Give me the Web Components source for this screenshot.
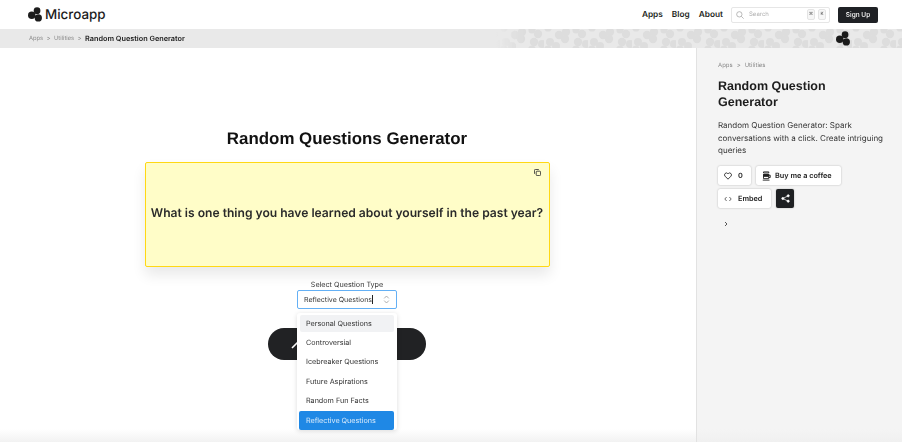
<!DOCTYPE html>
<html>
<head>
<meta charset="utf-8">
<title>Random Question Generator</title>
<style>
html, body { margin: 0; height: 100%; overflow: hidden; background: #fff; }
body { font-family: Inter, "Liberation Sans", sans-serif; color: #1d1f21; text-rendering: geometricPrecision; }
</style>
</head>
<body>
<micro-app></micro-app>

<script>
const logo = (size, color) => `
    <svg width="${size}" height="${size}" viewBox="0 0 24 24" fill="${color}">
        <circle cx="14.5" cy="5.8" r="5.4"/>
        <circle cx="6" cy="13" r="6"/>
        <circle cx="16.5" cy="17.5" r="5.8"/>
    </svg>`;

class AppHeader extends HTMLElement {
    constructor() {
        super();
        const shadow = this.attachShadow({ mode: 'open' });
        shadow.innerHTML = `
            <style>
            :host { display: flex; align-items: center; height: 29px; padding: 0 24px 0 28px; background: #fff; }
            .brand { display: flex; align-items: center; gap: 2px; font: 500 13.4px Inter, sans-serif; color: #1c1c1c; flex: 1; }
            nav { display: flex; gap: 9px; font: 600 8.3px Inter, sans-serif; margin-right: 8px; }
            .search { display: flex; align-items: center; box-sizing: border-box; width: 99px; height: 16px; border: 1px solid #e6e6e6; border-radius: 2px; padding: 0 3px 0 4px; margin-right: 8px; font-size: 6px; color: #b0b0b0; }
            .search svg { margin-right: 5px; }
            .search span { flex: 1; }
            .search kbd { box-sizing: border-box; width: 8px; height: 11px; margin-left: 3px; border: 1px solid #e4e4e4; border-radius: 2px; background: #f6f6f6; font: 500 4.5px Inter, sans-serif; color: #555; display: flex; align-items: center; justify-content: center; }
            button { width: 40px; height: 16px; padding: 0; border: 0; border-radius: 2px; background: #1f2125; color: #fff; font: 500 6.5px Inter, sans-serif; }
            </style>
            <div class="brand">${logo(15, '#1c1c1c')}<span>Microapp</span></div>
            <nav><span>Apps</span><span>Blog</span><span>About</span></nav>
            <div class="search">
                <svg width="8" height="8" viewBox="0 0 12 12" fill="none" stroke="#999" stroke-width="1"><circle cx="5" cy="5" r="4"/><path d="M8 8l3.5 3.5"/></svg>
                <span>Search</span><kbd>⌘</kbd><kbd>K</kbd>
            </div>
            <button>Sign Up</button>
        `;
    }
}

class AppCrumbs extends HTMLElement {
    constructor() {
        super();
        const shadow = this.attachShadow({ mode: 'open' });
        shadow.innerHTML = `
            <style>
            :host { display: flex; align-items: center; position: relative; height: 19px; padding-left: 29px; background: #e9e9e9; overflow: hidden; font: 400 5.8px Inter, sans-serif; color: #8b8b8b; }
            span { position: relative; }
            i { font-style: normal; position: relative; margin: 0 3.5px; color: #777; }
            b { position: relative; font-weight: 600; font-size: 7.3px; color: #1d1d1d; }
            .pattern { position: absolute; top: 0; left: 0; }
            .mark { position: absolute; left: 836px; top: 2px; line-height: 0; }
            </style>
            <svg class="pattern" width="902" height="19">
                <defs>
                    <linearGradient id="fade" x1="0" x2="1"><stop offset="0.55" stop-color="#fff" stop-opacity="0"/><stop offset="0.58" stop-color="#fff"/></linearGradient>
                    <mask id="m"><rect width="902" height="19" fill="url(#fade)"/></mask>
                    <pattern id="blobs" width="44" height="19" patternUnits="userSpaceOnUse" x="500" y="0">
                        <g fill="#dddddd">
                            <circle cx="22" cy="3" r="4.2"/><circle cx="15" cy="6" r="4.2"/><circle cx="21" cy="10" r="4.2"/>
                            <circle cx="6" cy="13" r="4"/><circle cx="12" cy="17" r="4"/><circle cx="4" cy="20" r="3.6"/><circle cx="4" cy="-1" r="3.6"/>
                            <circle cx="38" cy="5" r="4.2"/><circle cx="32" cy="1" r="3.6"/><circle cx="32" cy="20" r="3.6"/><circle cx="34" cy="13" r="4.2"/><circle cx="42" cy="15" r="4"/>
                        </g>
                    </pattern>
                </defs>
                <rect width="902" height="19" fill="url(#blobs)" mask="url(#m)"/>
            </svg>
            <span>Apps</span><i>&gt;</i><span>Utilities</span><i>&gt;</i><b>Random Question Generator</b>
            <div class="mark">${logo(15, '#1a1a1a')}</div>
        `;
    }
}

class QuestionCard extends HTMLElement {
    constructor() {
        super();
        const shadow = this.attachShadow({ mode: 'open' });
        shadow.innerHTML = `
            <style>
            :host { display: flex; align-items: center; justify-content: center; position: relative; box-sizing: border-box; width: 405px; height: 105px; padding-bottom: 5px; background: #fffdc8; border: 1px solid #ffd814; border-radius: 2px; box-shadow: 0 8px 14px rgba(0,0,0,.09); font: 600 12.1px Inter, sans-serif; color: #2a2a2a; white-space: nowrap; }
            svg { position: absolute; top: 6px; right: 8px; }
            </style>
            <svg width="7" height="7" viewBox="0 0 8 8" fill="none" stroke="#333" stroke-width="1"><rect x="2.5" y="2.5" width="5" height="5" rx="1"/><path d="M5.5 .5H1.5a1 1 0 0 0-1 1V5.5"/></svg>
            <slot></slot>
        `;
    }
}

class TypeSelect extends HTMLElement {
    constructor() {
        super();
        const shadow = this.attachShadow({ mode: 'open' });
        const options = ['Personal Questions', 'Controversial', 'Icebreaker Questions', 'Future Aspirations', 'Random Fun Facts', 'Reflective Questions'];
        shadow.innerHTML = `
            <style>
            :host { display: flex; flex-direction: column; align-items: center; position: relative; font: 400 7.2px Inter, sans-serif; color: #333; }
            label { line-height: 11px; }
            .field { display: flex; align-items: center; box-sizing: border-box; width: 100px; height: 19px; padding: 0 6px; background: #fff; border: 1px solid #64b0f5; border-radius: 2px; font-size: 7px; }
            .field span { flex: 1; }
            .field span::after { content: ''; display: inline-block; width: 1px; height: 9px; margin-left: 0; background: #222; vertical-align: -2px; }
            .menu { position: absolute; z-index: 2; top: 34px; left: 50%; margin-left: -50px; box-sizing: border-box; width: 100px; height: 117px; padding: 0 3px 0 2px; background: #fff; border-radius: 3px; box-shadow: 0 1px 5px rgba(0,0,0,.14); }
            .menu div { height: 19.5px; line-height: 19.5px; padding-left: 7px; border-radius: 2px; }
            .menu .hover { background: #f1f2f4; margin: 2px 0 .5px 1px; height: 17px; line-height: 17px; padding-left: 6px; }
            .menu .sel { background: #1f88e5; color: #dcecfb; }
            </style>
            <label>Select Question Type</label>
            <div class="field">
                <span>Reflective Questions</span>
                <svg width="7" height="9" viewBox="0 0 7 9" fill="none" stroke="#999" stroke-width=".8"><path d="M1.2 3.4L3.5 1l2.3 2.4M1.2 5.6L3.5 8l2.3-2.4"/></svg>
            </div>
            <div class="menu">
                ${options.map((o, i) => `<div class="${i == 0 ? 'hover' : i == 5 ? 'sel' : ''}">${o}</div>`).join('')}
            </div>
        `;
    }
}

class GeneratorPane extends HTMLElement {
    constructor() {
        super();
        const shadow = this.attachShadow({ mode: 'open' });
        shadow.innerHTML = `
            <style>
            :host { display: flex; flex-direction: column; align-items: center; flex: 1; box-sizing: border-box; padding: 80px 2px 0 0; border-right: 1px solid #e2e2e2; background: linear-gradient(to top, #f2f2f2, #fff 13px); }
            h1 { margin: 0 0 12px; font: 700 16.9px/22px "Liberation Sans", sans-serif; color: #111; }
            type-select { margin-top: 12px; }
            .go { display: flex; align-items: center; box-sizing: border-box; width: 158px; height: 32px; margin-top: 19px; padding-left: 23px; border: 0; border-radius: 16px; background: #212224; }
            </style>
            <h1>Random Questions Generator</h1>
            <question-card>What is one thing you have learned about yourself in the past year?</question-card>
            <type-select></type-select>
            <button class="go">
                <svg width="10" height="10" viewBox="0 0 10 10" fill="none" stroke="#fff" stroke-width="1.6"><path d="M1 9L7 3M7.5 .5v2M9.5 2.5h-2"/></svg>
            </button>
        `;
    }
}

class InfoSidebar extends HTMLElement {
    constructor() {
        super();
        const shadow = this.attachShadow({ mode: 'open' });
        shadow.innerHTML = `
            <style>
            :host { display: block; box-sizing: border-box; width: 205px; padding: 12px 12px 0 21px; background: linear-gradient(to top, #f0f0f0, #f4f4f4 13px); }
            .crumbs { display: flex; gap: 4px; font: 400 6px/12px Inter, sans-serif; color: #8a8a8a; }
            h2 { margin: 6px 0 0; max-width: 150px; font: 700 12.5px/16px "Liberation Sans", sans-serif; color: #1d1d1d; }
            p { margin: 9px 0 0; font: 400 8px/12.7px Inter, sans-serif; color: #333; }
            .row { display: flex; gap: 5px; margin-top: 4px; }
            p + .row { margin-top: 9px; }
            .btn { display: flex; align-items: center; box-sizing: border-box; height: 19px; background: #fff; border-radius: 2px; box-shadow: 0 0 2px rgba(0,0,0,.28); font: 600 7.3px Inter, sans-serif; color: #222; }
            .like { width: 33px; padding-left: 6px; gap: 6px; }
            .coffee { width: 85px; padding-left: 6px; gap: 4px; }
            .embed { width: 53px; padding-left: 6px; gap: 6px; }
            .share { width: 18px; justify-content: center; background: #1e2022; }
            .more { display: block; margin: 13px 0 0 5px; }
            </style>
            <div class="crumbs"><span>Apps</span><span>&gt;</span><span>Utilities</span></div>
            <h2>Random Question Generator</h2>
            <p>Random Question Generator: Spark conversations with a click. Create intriguing queries</p>
            <div class="row">
                <div class="btn like">
                    <svg width="8" height="8" viewBox="0 0 12 12" fill="none" stroke="#222" stroke-width="1.3"><path d="M6 10.8L1.6 6.3a2.8 2.8 0 0 1 4-4L6 2.8l.4-.5a2.8 2.8 0 0 1 4 4z"/></svg>
                    <span>0</span>
                </div>
                <div class="btn coffee">
                    <svg width="9" height="10" viewBox="0 0 12 13" fill="none" stroke="#222" stroke-width="1.2"><path d="M2 1h7v1.5H2zM2 4.5h7V10H2zM9 5.5h2v3H9M1 12h9"/><path d="M2 4.5h7v2.5H2z" fill="#222"/></svg>
                    <span>Buy me a coffee</span>
                </div>
            </div>
            <div class="row">
                <div class="btn embed">
                    <svg width="8" height="6" viewBox="0 0 8 6" fill="none" stroke="#444" stroke-width=".8"><path d="M2.6 1L.8 3l1.8 2M5.4 1l1.8 2-1.8 2"/></svg>
                    <span>Embed</span>
                </div>
                <div class="btn share">
                    <svg width="9" height="9" viewBox="0 0 10 10" fill="#fff" stroke="#fff" stroke-width=".8"><circle cx="8" cy="2" r="1.2"/><circle cx="2" cy="5" r="1.2"/><circle cx="8" cy="8" r="1.2"/><path d="M8 2L2 5l6 3" fill="none"/></svg>
                </div>
            </div>
            <svg class="more" width="6" height="6" viewBox="0 0 6 6" fill="none" stroke="#444" stroke-width=".9"><path d="M2 1l2 2-2 2"/></svg>
        `;
    }
}

class MicroApp extends HTMLElement {
    constructor() {
        super();
        const shadow = this.attachShadow({ mode: 'open' });
        shadow.innerHTML = `
            <style>
            :host { display: flex; flex-direction: column; height: 442px; opacity: .999; }
            .body { display: flex; flex: 1; }
            </style>
            <app-header></app-header>
            <app-crumbs></app-crumbs>
            <div class="body">
                <generator-pane></generator-pane>
                <info-sidebar></info-sidebar>
            </div>
        `;
    }
}

window.customElements.define('app-header', AppHeader);
window.customElements.define('app-crumbs', AppCrumbs);
window.customElements.define('question-card', QuestionCard);
window.customElements.define('type-select', TypeSelect);
window.customElements.define('generator-pane', GeneratorPane);
window.customElements.define('info-sidebar', InfoSidebar);
window.customElements.define('micro-app', MicroApp);
</script>
</body>
</html>
